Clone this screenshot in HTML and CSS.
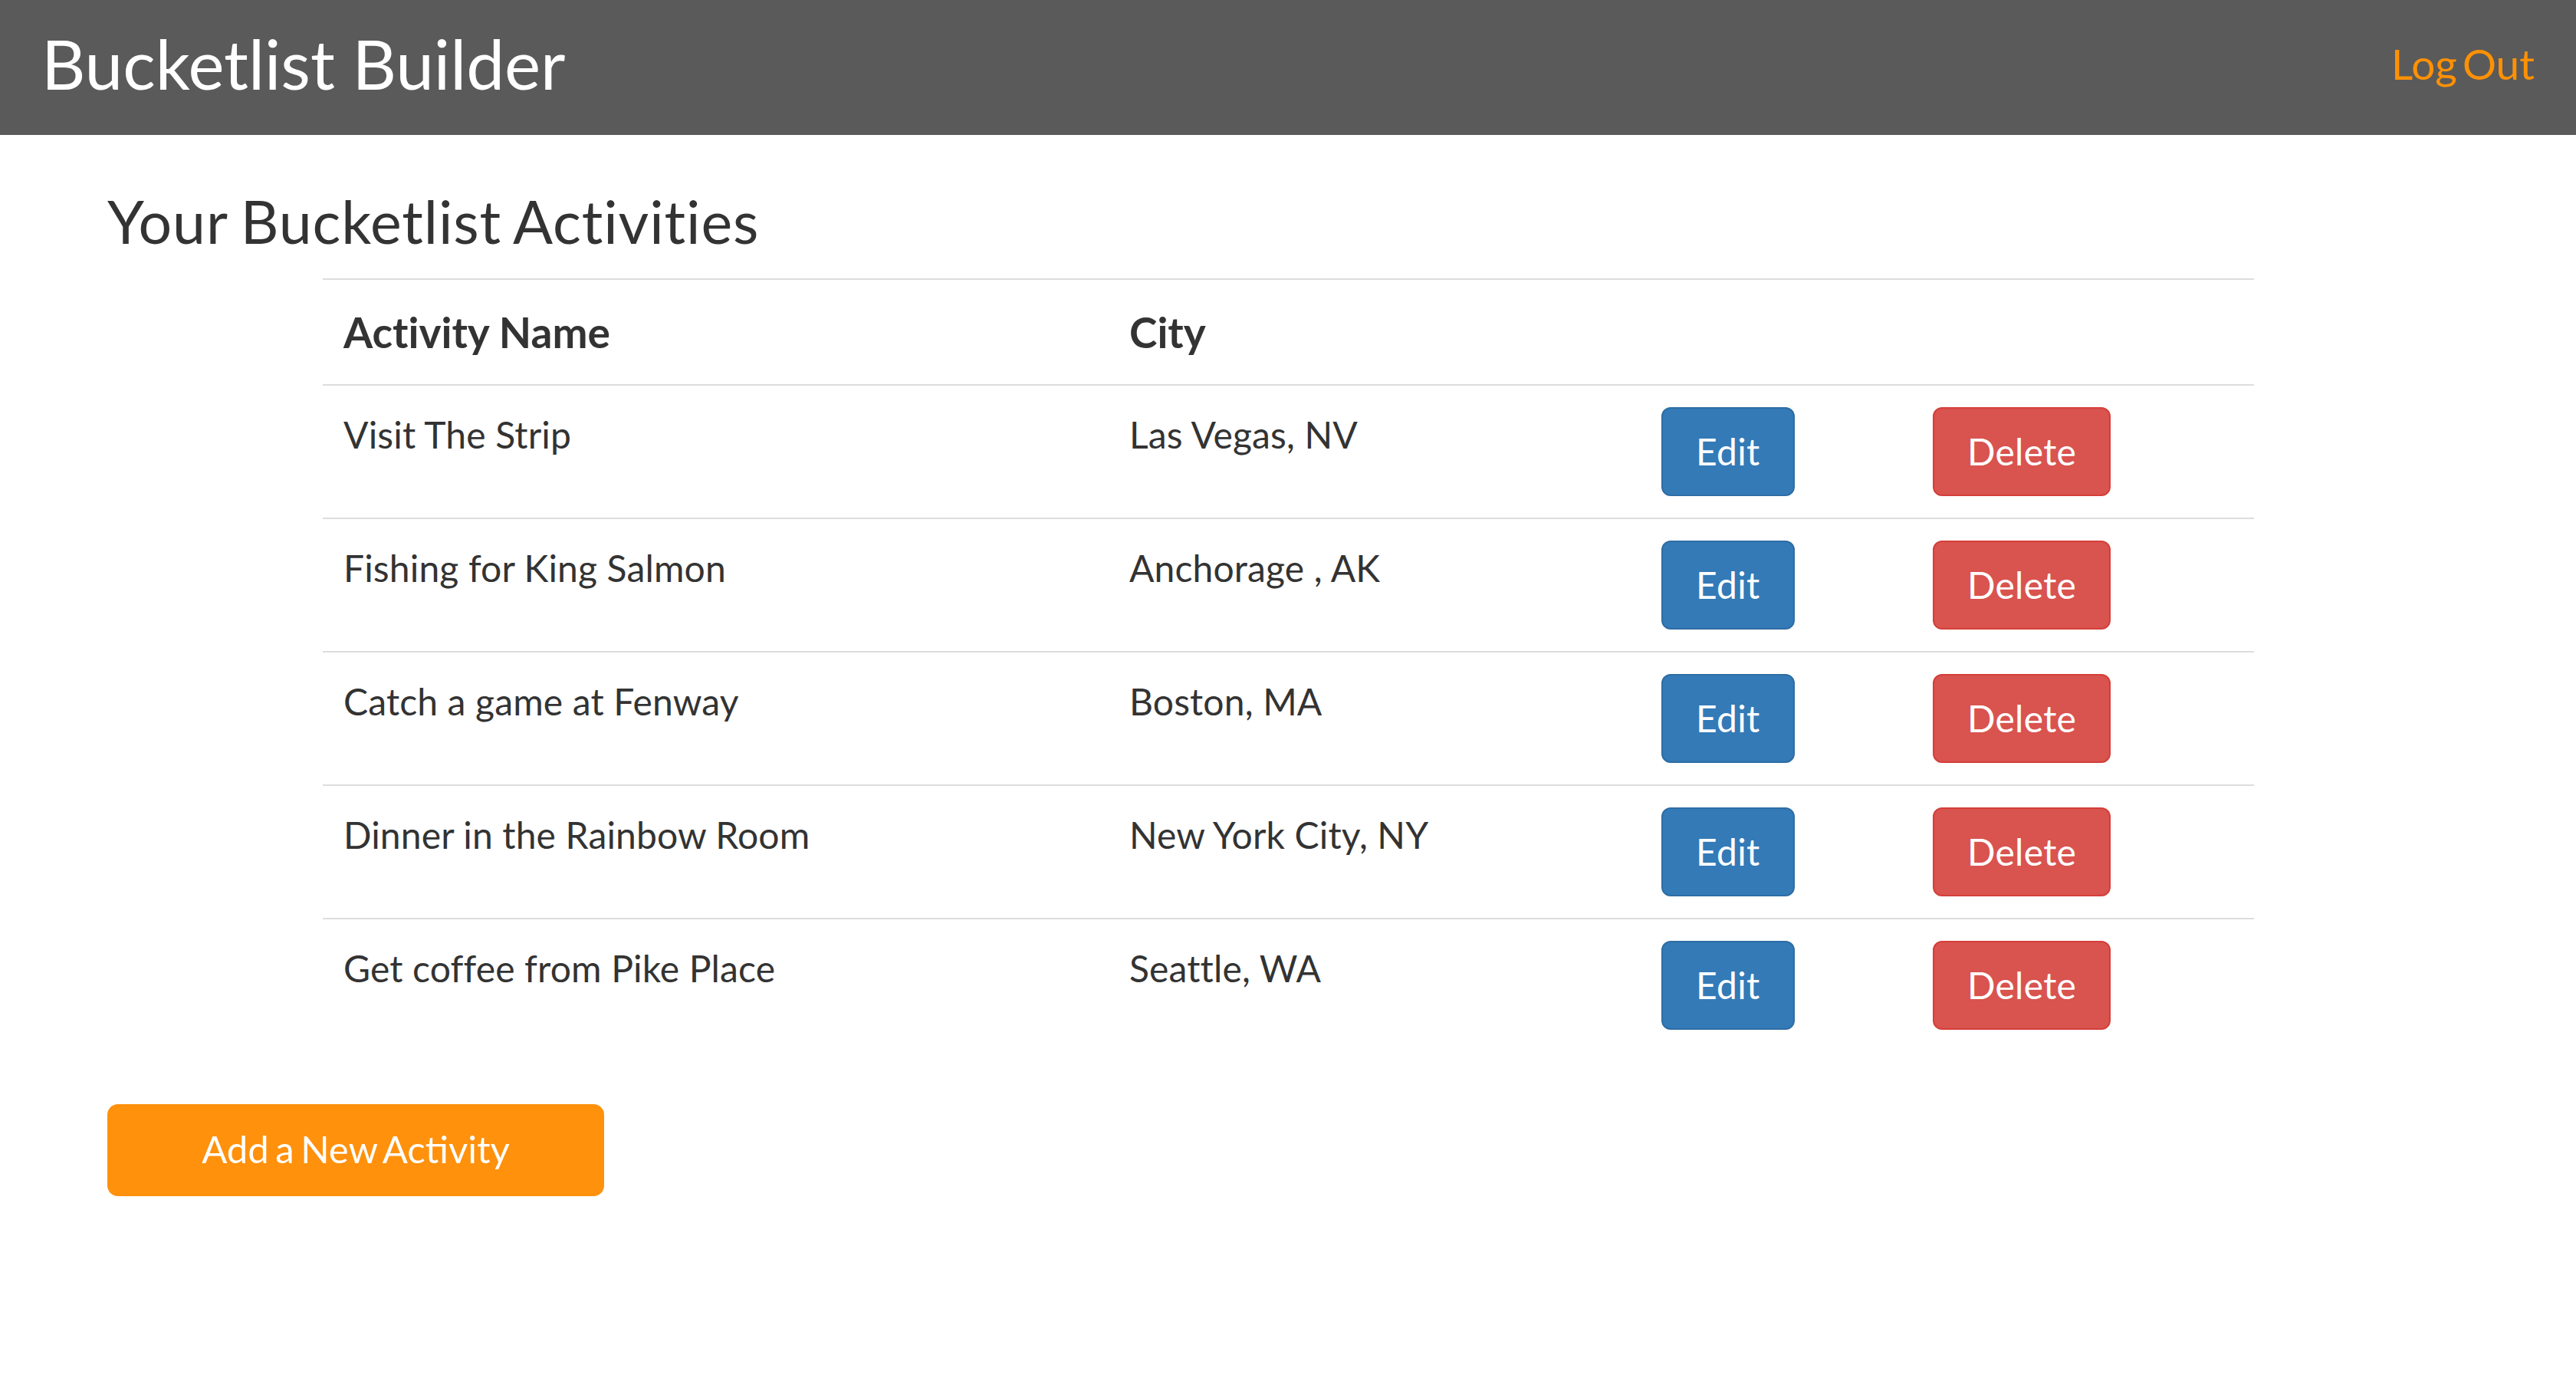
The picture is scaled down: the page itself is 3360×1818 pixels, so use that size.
FILE: index.html
```html
<!DOCTYPE html>
<html lang="en">
<head>
<meta charset="utf-8">
<title>Bucketlist Builder</title>
<link rel="stylesheet" href="styles.css">
</head>
<body>
<header class="topbar">
  <div class="brand">Bucketlist Builder</div>
  <a class="logout" href="#">Log Out</a>
</header>
<main class="container">
  <h1 class="page-title">Your Bucketlist Activities</h1>
  <table class="activities">
    <colgroup>
      <col class="c-name">
      <col class="c-city">
      <col class="c-edit">
      <col class="c-del">
    </colgroup>
    <thead>
      <tr><th>Activity Name</th><th>City</th><th></th><th></th></tr>
    </thead>
    <tbody>
      <tr><td>Visit The Strip</td><td>Las Vegas, NV</td><td><button class="btn btn-edit">Edit</button></td><td><button class="btn btn-delete">Delete</button></td></tr>
      <tr><td>Fishing for King Salmon</td><td>Anchorage , AK</td><td><button class="btn btn-edit">Edit</button></td><td><button class="btn btn-delete">Delete</button></td></tr>
      <tr><td>Catch a game at Fenway</td><td>Boston, MA</td><td><button class="btn btn-edit">Edit</button></td><td><button class="btn btn-delete">Delete</button></td></tr>
      <tr><td>Dinner in the Rainbow Room</td><td>New York City, NY</td><td><button class="btn btn-edit">Edit</button></td><td><button class="btn btn-delete">Delete</button></td></tr>
      <tr><td>Get coffee from Pike Place</td><td>Seattle, WA</td><td><button class="btn btn-edit">Edit</button></td><td><button class="btn btn-delete">Delete</button></td></tr>
    </tbody>
  </table>
  <button class="btn btn-add">Add a New Activity</button>
</main>
</body>
</html>
```

FILE: styles.css
```css
* { box-sizing: border-box; }
html, body { margin: 0; padding: 0; background: #fff; }
body {
  font-family: Lato, "Open Sans", "Liberation Sans", sans-serif;
  color: #333;
  font-size: 48px;
  line-height: 1.42857;
  font-variant-ligatures: none;
}

.topbar {
  height: 176px;
  background: #5a5a5a;
  display: flex;
  justify-content: space-between;
  align-items: flex-start;
  padding: 0 54px 0 54px;
}
.brand {
  color: #fff;
  font-size: 89px;
  line-height: 89px;
  margin-top: 38px;
}
.logout {
  color: #ff9105;
  text-decoration: none;
  font-size: 55px;
  line-height: 55px;
  margin-top: 56px;
  word-spacing: -7px;
}

.container { padding-left: 140px; }

.page-title {
  font-size: 77px;
  font-weight: 400;
  line-height: 1.1;
  margin: 70px 0 32px;
  letter-spacing: 0.9px;
  word-spacing: -3px;
}

.activities {
  margin-left: 281px;
  width: 2519px;
  border-collapse: collapse;
  table-layout: fixed;
  margin-bottom: 69px;
}
.c-name { width: 1025px; }
.c-city { width: 694px; }
.c-edit { width: 354px; }
.c-del { width: 446px; }

.activities th,
.activities td {
  border-top: 2px solid #ddd;
  text-align: left;
  vertical-align: top;
  padding: 28px 27px;
}
.activities th {
  font-size: 55px;
  font-weight: 700;
  line-height: 80px;
}
.activities td {
  font-size: 48px;
  line-height: 72px;
  letter-spacing: 0.15px;
}

.btn {
  font-family: inherit;
  font-size: 48px;
  line-height: 68px;
  color: #fff;
  border: 2px solid transparent;
  border-radius: 12px;
  padding: 22px 43px;
  cursor: pointer;
  display: inline-block;
  letter-spacing: 0.3px;
}
.btn-edit { background: #337ab7; border-color: #2e6da4; }
.btn-delete { background: #d9534f; border-color: #d43f3a; }
.btn-add {
  background: #ff910c;
  border: none;
  border-radius: 14px;
  font-size: 49px;
  padding: 24px 0 28px;
  width: 648px;
  text-align: center;
  word-spacing: -4px;
  letter-spacing: 0;
}
```
